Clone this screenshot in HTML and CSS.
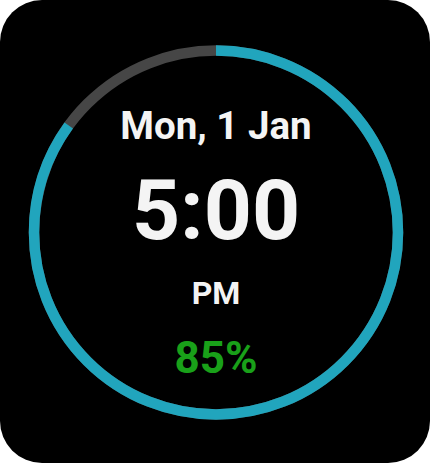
FILE: index.html
```html
<!DOCTYPE html>
<html>
<head>
<meta charset="utf-8">
<link rel="stylesheet" href="styles.css">
</head>
<body>
<div class="watch">
  <svg class="ring" width="430" height="463" viewBox="0 0 430 463">
    <circle class="track" cx="216" cy="232.5" r="182"/>
    <circle class="level" cx="216" cy="232.5" r="182" pathLength="100" transform="rotate(-90 216 232.5)"/>
  </svg>
  <div class="face">
    <div class="date">Mon, 1 Jan</div>
    <div class="time">5:00</div>
    <div class="ampm">PM</div>
    <div class="battery">85%</div>
  </div>
</div>
</body>
</html>
```
FILE: styles.css
```css
html, body {
  margin: 0;
  padding: 0;
  background: #ffffff;
}
.watch {
  width: 430px;
  height: 463px;
  background: #000000;
  border-radius: 42px;
  display: grid;
  overflow: hidden;
  font-family: Roboto, "Liberation Sans", sans-serif;
}
.ring, .face {
  grid-area: 1 / 1;
}
.ring circle {
  fill: none;
  stroke-width: 10.5;
}
.track {
  stroke: #464646;
}
.level {
  stroke: #21a5bd;
  stroke-dasharray: 85 15;
}
.face {
  display: flex;
  flex-direction: column;
  align-items: center;
  padding-top: 107px;
  padding-left: 2px;
  color: #f4f4f4;
  font-weight: 700;
}
.date {
  font-size: 38.5px;
  line-height: 38px;
}
.time {
  font-size: 84px;
  line-height: 84px;
  margin-top: 24px;
}
.ampm {
  font-size: 32px;
  line-height: 32px;
  margin-top: 24px;
}
.battery {
  font-size: 44px;
  line-height: 44px;
  margin-top: 27px;
  color: #19a019;
}
```
